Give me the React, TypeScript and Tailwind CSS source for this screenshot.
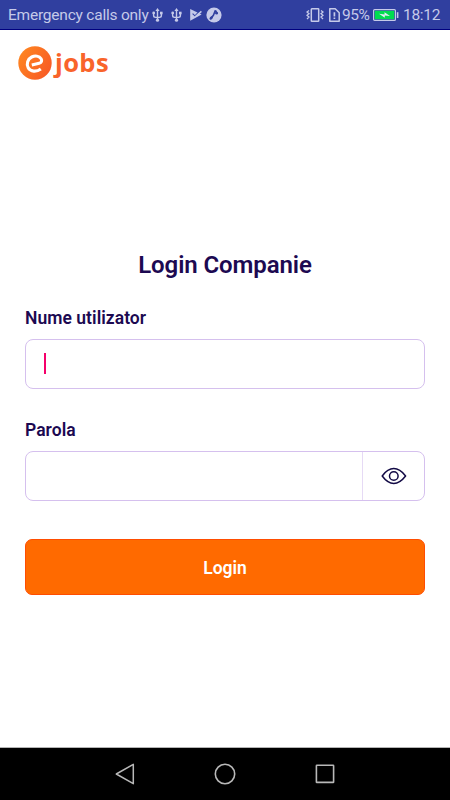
import React from 'react';

interface IconProps {
    className?: string;
}

const UsbIcon: React.FC<IconProps> = ({ className }) => (
    <svg width="11" height="14" viewBox="0 0 11 14" fill="none" stroke="currentColor" className={className}>
        <path d="M5.5 2v10M1.6 5v2.6q0 1.8 2 1.8h3.8q2 0 2-1.8V5" strokeWidth="1.4" />
        <path d="M5.5 0l2.1 3H3.4z" fill="currentColor" stroke="none" />
        <circle cx="5.5" cy="12.2" r="1.6" fill="currentColor" stroke="none" />
        <circle cx="1.7" cy="4.9" r="1.4" fill="currentColor" stroke="none" />
        <path d="M8 3.7h2.6v2.6H8z" fill="currentColor" stroke="none" />
    </svg>
);

const StatusBar: React.FC = () => (
    <div className="flex h-[30px] items-center border-b border-[#00007f] bg-[#303f9f] pt-[1px] text-[#c5cae9]">
        <span className="ml-[8px] w-[144px] shrink-0 whitespace-nowrap text-[15.5px] leading-[18px] tracking-[-0.22px]">Emergency calls only</span>
        <UsbIcon className="shrink-0" />
        <UsbIcon className="ml-[8px] shrink-0" />
        <svg width="12" height="12" viewBox="0 0 12 12" className="ml-[8px] shrink-0">
            <path d="M0.2 0L11.6 5.5L0.2 11.8z" fill="currentColor" />
            <path d="M2.6 4.6l2.3 2.2L9.8 1.8" fill="none" stroke="#303f9f" strokeWidth="1.1" />
            <path d="M5 8L11.4 2.4" fill="none" stroke="currentColor" strokeWidth="1.5" />
        </svg>
        <svg width="16" height="16" viewBox="0 0 16 16" className="ml-[4px] shrink-0">
            <circle cx="8" cy="8" r="7.6" fill="currentColor" />
            <path d="M9.4 3.2L7.4 8.4L4.6 11.6M9.4 3.4L11 6.4" fill="none" stroke="#303f9f" strokeWidth="1.6" />
            <ellipse cx="5.2" cy="11" rx="1.9" ry="1.4" fill="#303f9f" transform="rotate(-40 5.2 11)" />
            <circle cx="10.6" cy="6.2" r="1.4" fill="#303f9f" />
        </svg>
        <svg width="18" height="14" viewBox="0 0 18 14" fill="none" stroke="currentColor" className="ml-[84px] shrink-0">
            <rect x="5.3" y="0.8" width="7.4" height="12.4" rx="0.5" strokeWidth="1.5" />
            <path d="M3 2.5L1 4l2 1.7L1 7.3L3 9l-2 2M15 2.5L17 4l-2 1.7l2 1.6L15 9l2 2" strokeWidth="1.3" />
        </svg>
        <svg width="11" height="14" viewBox="0 0 11 14" fill="none" stroke="currentColor" className="ml-[5px] shrink-0">
            <path d="M0.8 0.8h5.4l4 4v8.4H0.8z" strokeWidth="1.5" strokeLinejoin="round" />
            <path d="M5.4 4.3v4.1M5.4 9.5v1.6" strokeWidth="1.7" />
        </svg>
        <span className="ml-[2px] mt-[-1px] w-[31px] shrink-0 text-[15.5px] leading-[18px] tracking-[-0.4px]">95%</span>
        <svg width="26" height="12" viewBox="0 0 26 12" className="shrink-0">
            <rect x="0.6" y="0.6" width="21.8" height="10.8" rx="1" fill="none" stroke="currentColor" strokeWidth="1.2" />
            <rect x="1.8" y="1.8" width="19.4" height="8.4" fill="#00dc50" />
            <path d="M6 4.8l5.5 0.7V3.2L17 7.1l-5.2-0.6v2.3z" fill="#e3edf5" />
            <path d="M24.6 3.2v5.8" stroke="currentColor" strokeWidth="1.6" />
        </svg>
        <span className="ml-[4px] whitespace-nowrap text-[15.5px] leading-[18px] tracking-[-0.3px]">18:12</span>
    </div>
);

const Logo: React.FC = () => (
    <div className="ml-[18px] mt-[16px] flex h-[34px] items-center">
        <svg width="34" height="34" viewBox="0 0 34 34" fill="none" className="shrink-0">
            <defs>
                <linearGradient id="logo" x1="0" y1="0" x2="1" y2="0.6">
                    <stop offset="0" stopColor="#ff8a20" />
                    <stop offset="1" stopColor="#f85d25" />
                </linearGradient>
            </defs>
            <circle cx="17" cy="17" r="16.7" fill="url(#logo)" />
            <path
                d="M13.8 18.9L21.2 17.2C23.6 16.6 24.2 14.6 23.1 12.8C21.2 9.8 17 9.4 13.7 11C9.6 13.1 8.2 18.1 10.2 21.8C12.4 25.7 18.4 26.3 22.8 23"
                stroke="#fff"
                strokeWidth="3.1"
            />
        </svg>
        <span className="ml-[3px] mt-[-2px] font-['Open_Sans'] text-[25.5px] font-bold leading-[30px] tracking-[0.4px] text-[#f9642b]">jobs</span>
    </div>
);

const EyeIcon: React.FC = () => (
    <svg width="26" height="18" viewBox="0 0 26 18" fill="none" stroke="#120a45" strokeWidth="1.5">
        <path d="M1.2 9C4.5 4.5 8 1.6 12.8 1.6S21.1 4.5 24.6 9C21.1 13.5 17.6 16.4 12.8 16.4S4.5 13.5 1.2 9z" strokeLinejoin="round" />
        <circle cx="12.8" cy="9" r="4.3" />
    </svg>
);

const NavigationBar: React.FC = () => (
    <div className="mt-auto flex h-[53px] items-center justify-center gap-[78px] border-t border-[#b4b4b4] bg-black text-[#b8b8b8]">
        <svg width="22" height="22" viewBox="0 0 22 22" fill="none" stroke="currentColor" strokeWidth="1.5" strokeLinejoin="round">
            <path d="M19.3 1.3v19.4L2.3 11z" />
        </svg>
        <svg width="22" height="22" viewBox="0 0 22 22" fill="none" stroke="currentColor" strokeWidth="1.6">
            <circle cx="11" cy="11" r="9.7" />
        </svg>
        <svg width="22" height="22" viewBox="0 0 22 22" fill="none" stroke="currentColor" strokeWidth="1.6">
            <rect x="2.4" y="2.2" width="17.2" height="17.2" rx="0.5" />
        </svg>
    </div>
);

export default function App() {
    return (
        <div className="flex h-[800px] w-[450px] flex-col overflow-hidden bg-white font-[Roboto,sans-serif]">
            <StatusBar />
            <Logo />
            <form className="mt-[170px] flex flex-col px-[25px] text-[#1c0951]" onSubmit={e => e.preventDefault()}>
                <h1 className="text-center text-[24px] font-semibold leading-[30px] tracking-[-0.1px]">Login Companie</h1>
                <label className="mt-[26px] text-[17.5px] font-semibold leading-[24px] tracking-[0.04px]">Nume utilizator</label>
                <div className="mt-[9px] flex h-[50px] items-center rounded-[8px] border border-[#d5c0ee] pl-[18px]">
                    <div className="mt-[-1px] h-[21px] w-[2px] bg-[#f5006a]" />
                </div>
                <label className="mt-[29px] text-[17.5px] font-semibold leading-[24px] tracking-[0.04px]">Parola</label>
                <div className="mt-[9px] flex h-[50px] rounded-[8px] border border-[#d5c0ee]">
                    <div className="flex-1" />
                    <button type="button" className="flex w-[62px] items-center justify-center border-l border-[#e6daf5]">
                        <EyeIcon />
                    </button>
                </div>
                <button type="submit" className="mt-[38px] h-[56px] rounded-[7px] border border-[#ff4d00] bg-[#ff6a00] pt-[2px] text-[17.5px] font-semibold text-white">
                    Login
                </button>
            </form>
            <NavigationBar />
        </div>
    );
}
